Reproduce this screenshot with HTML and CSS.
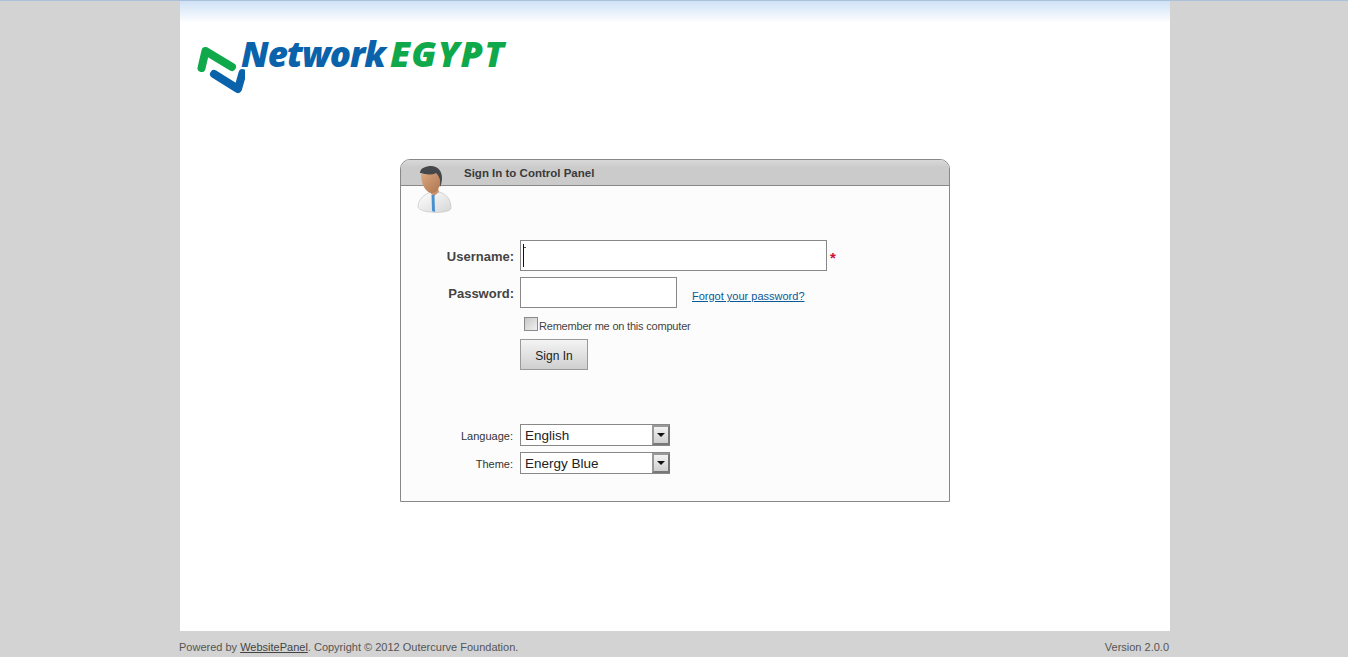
FILE: index.html
```html
<!DOCTYPE html>
<html lang="en">
<head>
    <meta charset="UTF-8">
    <title>Sign In to Control Panel</title>
    <link rel="stylesheet" href="styles.css">
</head>
<body>
    <div class="wrapper">
        <div class="logo">
            <svg class="logo-mark" width="50" height="56" viewBox="0 0 50 56">
                <polyline points="6.5,30 10.5,13 37,29" fill="none" stroke="#0fa84a" stroke-width="8" stroke-linejoin="round" stroke-linecap="round"/>
                <polyline points="19,36 43,51 47.5,35" fill="none" stroke="#0a62ab" stroke-width="8" stroke-linejoin="round" stroke-linecap="round"/>
            </svg>
            <span class="logo-network">Network</span>
            <span class="logo-egypt">EGYPT</span>
        </div>

        <div class="panel">
            <div class="panel-header">
                <svg class="avatar" width="36" height="50" viewBox="0 0 36 50">
                    <defs>
                        <linearGradient id="shirt" x1="0" y1="0" x2="1" y2="1">
                            <stop offset="0" stop-color="#ffffff"/>
                            <stop offset="1" stop-color="#d6d6d6"/>
                        </linearGradient>
                        <linearGradient id="face" x1="0" y1="0" x2="1" y2="1">
                            <stop offset="0" stop-color="#dba87f"/>
                            <stop offset="1" stop-color="#ad7550"/>
                        </linearGradient>
                    </defs>
                    <path d="M1 42 C1 34 8 29 14 27 L22 27 C30 29 34 35 34 43 C34 49 3 49 1 42 Z" fill="url(#shirt)" stroke="#c4c4c4" stroke-width="0.7"/>
                    <path d="M13 24 L14 29 L17 31 L22 27 L21 23 Z" fill="#c79270"/>
                    <path d="M14.5 30 L17.5 30 L18 47 L15 46 Z" fill="#4a90cf"/>
                    <path d="M3 8 C3 3 9 1 14 1 C21 1 25 6 25 13 C25 17 24 20 23 22 L20 12 Z" fill="#45484a"/>
                    <path d="M4 8 C9 10 15 10 19 8 C21 10 24 14 23 19 C22 24 19 28 15 28 C9 28 4 20 4 8 Z" fill="url(#face)"/>
                </svg>
                <span class="panel-title">Sign In to Control Panel</span>
            </div>
            <div class="panel-body">
                <div class="form-row row-username">
                    <label class="field-label">Username:</label>
                    <div class="input-wrap">
                        <input class="text-input input-long" type="text">
                        <span class="caret"></span>
                    </div>
                    <span class="required">*</span>
                </div>
                <div class="form-row row-password">
                    <label class="field-label">Password:</label>
                    <input class="text-input input-short" type="password">
                    <a class="forgot" href="#">Forgot your password?</a>
                </div>
                <div class="form-row row-remember">
                    <span class="spacer"></span>
                    <label class="remember"><span class="check-box"></span>Remember me on this computer</label>
                </div>
                <div class="form-row row-button">
                    <span class="spacer"></span>
                    <button class="btn" type="button">Sign In</button>
                </div>
                <div class="form-row row-select row-language">
                    <label class="select-label">Language:</label>
                    <div class="select-wrap">
                        <select class="select-box"><option>English</option></select>
                        <span class="select-arrow"></span>
                    </div>
                </div>
                <div class="form-row row-select">
                    <label class="select-label">Theme:</label>
                    <div class="select-wrap">
                        <select class="select-box"><option>Energy Blue</option></select>
                        <span class="select-arrow"></span>
                    </div>
                </div>
            </div>
        </div>
    </div>
    <div class="footer">
        <span>Powered by <a href="#">WebsitePanel</a>. Copyright © 2012 Outercurve Foundation.</span>
        <span>Version 2.0.0</span>
    </div>
</body>
</html>
```

FILE: styles.css
```css
html, body {
    height: 100%;
}
body {
    margin: 0;
    background: #d3d3d3;
    border-top: 1px solid #a9c1d9;
    box-sizing: border-box;
    font-family: 'Liberation Sans', Arial, sans-serif;
    overflow: hidden;
}
.wrapper {
    width: 990px;
    height: 630px;
    margin: 0 auto;
    background: linear-gradient(#cfe2f6 0, #ffffff 22px);
    overflow: hidden;
    position: relative;
    left: 1px;
}
.logo {
    display: flex;
    align-items: flex-start;
    height: 158px;
    padding-left: 15px;
    box-sizing: border-box;
    font-family: 'Open Sans', 'Liberation Sans', sans-serif;
    font-size: 35px;
    font-weight: 800;
    font-style: italic;
    line-height: 40px;
}
.logo-mark {
    margin-top: 37px;
    flex: none;
}
.logo-network {
    margin: 33px 0 0 -4px;
    letter-spacing: -1px;
    color: #0a62ab;
}
.logo-egypt {
    margin: 33px 0 0 5px;
    font-size: 36px;
    letter-spacing: 1.2px;
    color: #0fa84a;
}
.panel {
    width: 550px;
    height: 343px;
    margin: 0 auto;
    box-sizing: border-box;
    border: 1px solid #888;
    border-radius: 10px 10px 0 0;
    background: #fcfcfc;
}
.panel-header {
    height: 26px;
    box-sizing: border-box;
    border-bottom: 1px solid #888;
    border-radius: 9px 9px 0 0;
    background: linear-gradient(#d8d8d8, #cbcbcb 30%);
    position: relative;
    padding-left: 63px;
    line-height: 24px;
}
.avatar {
    position: absolute;
    left: 16px;
    top: 5px;
}
.panel-title {
    font-size: 11.5px;
    font-weight: bold;
    color: #3a3a3a;
}
.panel-body {
    padding-top: 54px;
}
.form-row {
    display: flex;
    align-items: center;
}
.field-label {
    width: 113px;
    margin-right: 6px;
    padding-top: 2px;
    text-align: right;
    font-size: 13px;
    font-weight: bold;
    color: #444;
}
.spacer {
    width: 119px;
    flex: none;
}
.input-wrap {
    position: relative;
    display: flex;
}
.text-input {
    height: 31px;
    box-sizing: border-box;
    border: 1px solid #888;
    background: #fff;
    padding: 0;
    outline: none;
}
.input-long {
    width: 307px;
}
.input-short {
    width: 157px;
}
.caret {
    position: absolute;
    left: 3px;
    top: 4px;
    width: 1px;
    height: 23px;
    background: #111;
}
.caret::after {
    content: "";
    position: absolute;
    left: 1px;
    top: 3px;
    width: 2px;
    height: 1px;
    background: #555;
}
.required {
    margin: 4px 0 0 3px;
    font-size: 15px;
    font-weight: bold;
    color: #d0103a;
}
.row-password {
    margin-top: 6px;
}
.forgot {
    margin: 7px 0 0 15px;
    font-size: 11px;
    color: #0a5a96;
}
.row-remember {
    margin-top: 9px;
    height: 18px;
}
.remember {
    display: flex;
    align-items: center;
    margin-left: 4px;
    font-size: 11px;
    letter-spacing: -0.2px;
    color: #444;
}
.check-box {
    width: 12px;
    height: 12px;
    margin-right: 1px;
    border: 1px solid #8a8a8a;
    background: linear-gradient(135deg, #c8c8c8, #f0f0f0);
    position: relative;
    top: -2px;
}
.row-button {
    margin-top: 4px;
}
.btn {
    width: 68px;
    height: 31px;
    padding: 3px 0 0;
    border: 1px solid #999;
    background: linear-gradient(#f4f4f4, #cfcfcf);
    font-family: 'Liberation Sans', Arial, sans-serif;
    font-size: 12px;
    color: #222;
}
.row-select {
    margin-top: 6px;
}
.row-language {
    margin-top: 54px;
}
.select-label {
    width: 112px;
    margin-right: 7px;
    padding-top: 2px;
    text-align: right;
    font-size: 11px;
    color: #333;
}
.select-wrap {
    position: relative;
    display: flex;
}
.select-box {
    width: 150px;
    height: 22px;
    box-sizing: border-box;
    border: 1px solid #888;
    border-radius: 0;
    background: #fff;
    padding: 0 0 0 4px;
    appearance: none;
    outline: none;
    font-family: 'Liberation Sans', Arial, sans-serif;
    font-size: 13.5px;
    color: #222;
}
.select-arrow {
    position: absolute;
    right: 0;
    top: 1px;
    width: 18px;
    height: 20px;
    box-sizing: border-box;
    border: 2px solid #777;
    border-top-color: #999;
    border-left-color: #999;
    background: linear-gradient(#f2f2f2, #cfcfcf);
}
.select-arrow::after {
    content: "";
    position: absolute;
    left: 3px;
    top: 6px;
    border-left: 4px solid transparent;
    border-right: 4px solid transparent;
    border-top: 4px solid #111;
}
.footer {
    width: 990px;
    margin: 0 auto;
    padding-top: 10px;
    display: flex;
    justify-content: space-between;
    font-size: 11px;
    color: #555;
}
.footer a {
    color: #444;
}
```
